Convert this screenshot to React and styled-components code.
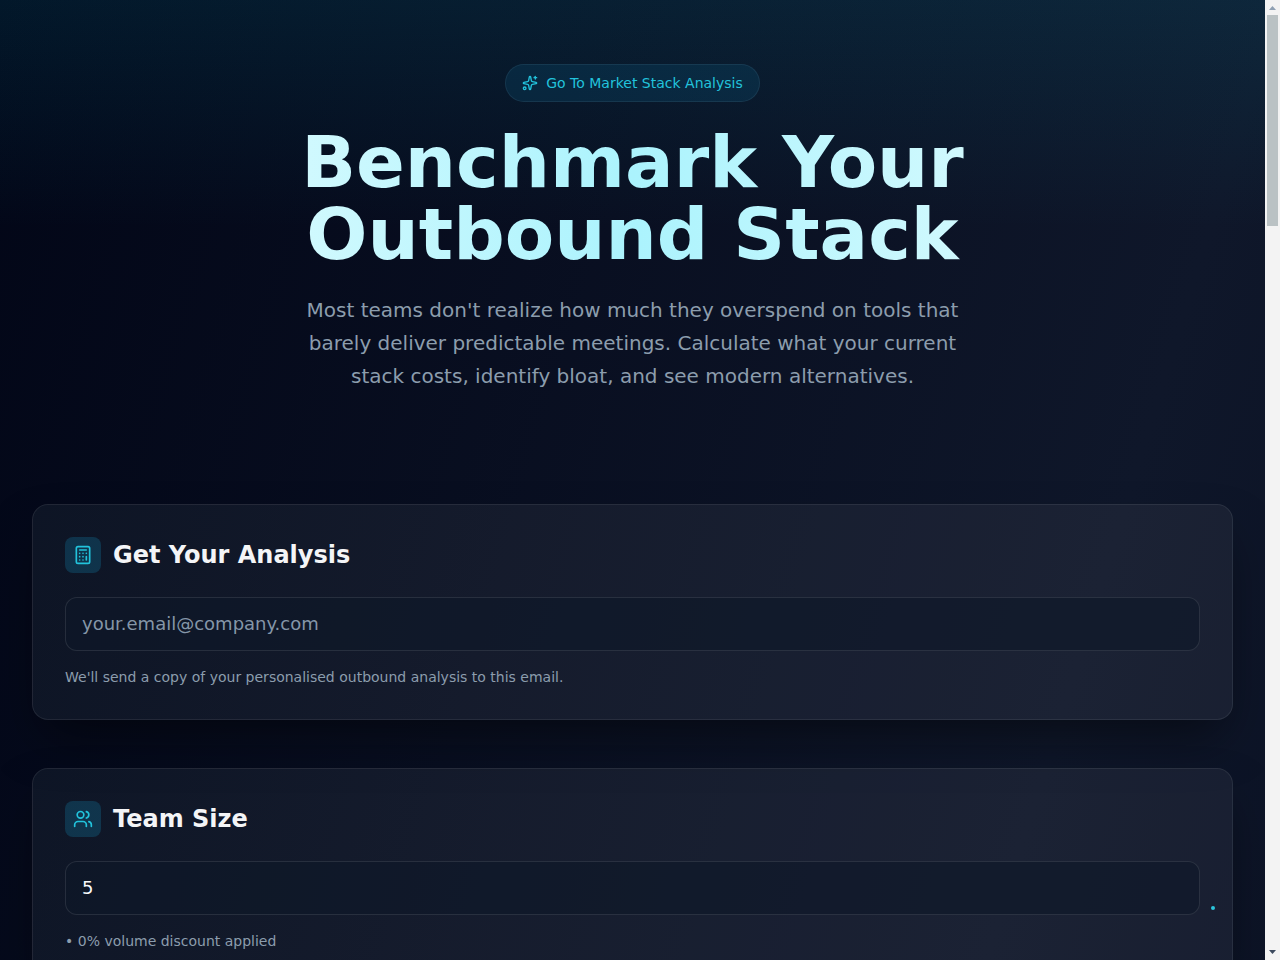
import React, { useState } from 'react';
import styled, { createGlobalStyle } from 'styled-components';
import { Calculator, Sparkles, Users } from 'lucide-react';

const GlobalStyle = createGlobalStyle`
  *,
  *::before,
  *::after {
    box-sizing: border-box;
  }

  body {
    margin: 0;
    background: #020617;
    color: #f8fafc;
    font-family: 'DejaVu Sans', sans-serif;
  }
`;

const Shell = styled.div`
  display: grid;
  grid-template-columns: minmax(0, 1fr) 15px;
  height: 100vh;
`;

const Page = styled.div`
  position: relative;
  overflow-y: auto;
  scrollbar-width: none;
  background: linear-gradient(107deg, #020617 0, #0f172a 1224px, #020617 2448px);
`;

const Hero = styled.header`
  display: flex;
  flex-direction: column;
  align-items: center;
  gap: 24px;
  padding: 64px 32px;
  text-align: center;
  background: linear-gradient(180deg, rgba(6, 182, 212, 0.1) 0%, rgba(6, 182, 212, 0) 50%);
`;

const Pill = styled.div`
  display: inline-flex;
  align-items: center;
  gap: 8px;
  padding: 8px 16px;
  border-radius: 20px;
  border: 1px solid rgba(120, 170, 200, 0.12);
  background: rgba(16, 150, 200, 0.13);
  color: #22c3dc;
  font-size: 14px;
  line-height: 20px;
`;

const Title = styled.h1`
  max-width: 768px;
  margin: 0;
  font-size: 72px;
  font-weight: 700;
  line-height: 72px;
  color: transparent;
  background: linear-gradient(90deg, #d6fafe 0%, #abf3fd 50%, #d6fafe 100%);
  background-clip: text;
  -webkit-background-clip: text;
`;

const Lead = styled.p`
  max-width: 672px;
  margin: 0;
  color: #8c9dad;
  font-size: 20px;
  line-height: 33px;
`;

const Main = styled.main`
  display: flex;
  flex-direction: column;
  gap: 48px;
  padding: 47px 32px 64px;
`;

const Card = styled.section`
  padding: 32px;
  border: 1px solid rgba(255, 255, 255, 0.08);
  border-radius: 16px;
  background: linear-gradient(107deg, rgba(200, 255, 255, 0.05) 0%, rgba(255, 255, 255, 0.05) 40%);
  box-shadow: 0 25px 50px -12px rgba(0, 0, 0, 0.5);
`;

const CardHeader = styled.div`
  display: flex;
  align-items: center;
  gap: 12px;
  margin-bottom: 24px;
`;

const IconBox = styled.span`
  display: flex;
  padding: 8px;
  border-radius: 8px;
  background: rgba(20, 150, 195, 0.24);
  color: #22c3dc;
`;

const CardTitle = styled.h2`
  margin: 0;
  color: #f4f5f7;
  font-size: 24px;
  font-weight: 700;
  line-height: 32px;
`;

const Field = styled.input`
  display: block;
  width: 100%;
  padding: 12px 16px;
  border: 1px solid rgba(255, 255, 255, 0.1);
  border-radius: 12px;
  outline: none;
  background: rgba(13, 23, 40, 0.6);
  color: #f8fafc;
  font-family: inherit;
  font-size: 18px;
  line-height: 28px;
  appearance: textfield;

  &::placeholder {
    color: #8596a8;
    opacity: 1;
  }

  &:focus {
    border-color: #22c3dc;
  }
`;

const Hint = styled.p`
  margin: 16px 0 0;
  color: #8c9dad;
  font-size: 14px;
  line-height: 20px;
`;

const Particle = styled.span`
  position: fixed;
  right: 65px;
  bottom: 50px;
  width: 4px;
  height: 4px;
  border-radius: 50%;
  background: #2cc5dc;
`;

const ScrollTrack = styled.div`
  display: flex;
  flex-direction: column;
  align-items: center;
  justify-content: space-between;
  background: #f3f3f3;
`;

const ScrollThumb = styled.div`
  width: 11px;
  height: 22%;
  margin-bottom: auto;
  background: #bac2c4;
`;

const ScrollArrow = styled.svg`
  display: block;
  width: 15px;
  height: 15px;
  fill: ${props => props.color};
`;

const volumeDiscount = seats => {
  if (seats >= 50) return 20;
  if (seats >= 20) return 10;
  return 0;
};

const App = () => {
  const [email, setEmail] = useState('');
  const [teamSize, setTeamSize] = useState(5);

  return (
    <Shell>
      <GlobalStyle />
      <Page>
        <Hero>
          <Pill>
            <Sparkles size={16} />
            Go To Market Stack Analysis
          </Pill>
          <Title>Benchmark Your Outbound Stack</Title>
          <Lead>
            Most teams don't realize how much they overspend on tools that barely deliver predictable
            meetings. Calculate what your current stack costs, identify bloat, and see modern
            alternatives.
          </Lead>
        </Hero>
        <Main>
          <Card>
            <CardHeader>
              <IconBox>
                <Calculator size={20} />
              </IconBox>
              <CardTitle id="analysis-title">Get Your Analysis</CardTitle>
            </CardHeader>
            <Field
              type="email"
              aria-labelledby="analysis-title"
              placeholder="your.email@company.com"
              value={email}
              onChange={e => setEmail(e.target.value)}
            />
            <Hint>We'll send a copy of your personalised outbound analysis to this email.</Hint>
          </Card>
          <Card>
            <CardHeader>
              <IconBox>
                <Users size={20} />
              </IconBox>
              <CardTitle id="team-title">Team Size</CardTitle>
            </CardHeader>
            <Field
              type="number"
              min="1"
              aria-labelledby="team-title"
              value={teamSize}
              onChange={e => setTeamSize(e.target.value)}
            />
            <Hint>• {volumeDiscount(teamSize)}% volume discount applied</Hint>
          </Card>
        </Main>
        <Particle />
      </Page>
      <ScrollTrack aria-hidden="true">
        <ScrollArrow viewBox="0 0 15 15" color="#8fa0b3">
          <path d="M4 10h7L7.5 6z" />
        </ScrollArrow>
        <ScrollThumb />
        <ScrollArrow viewBox="0 0 15 15" color="#3c4a5e">
          <path d="M4 5h7L7.5 9z" />
        </ScrollArrow>
      </ScrollTrack>
    </Shell>
  );
};

export default App;
